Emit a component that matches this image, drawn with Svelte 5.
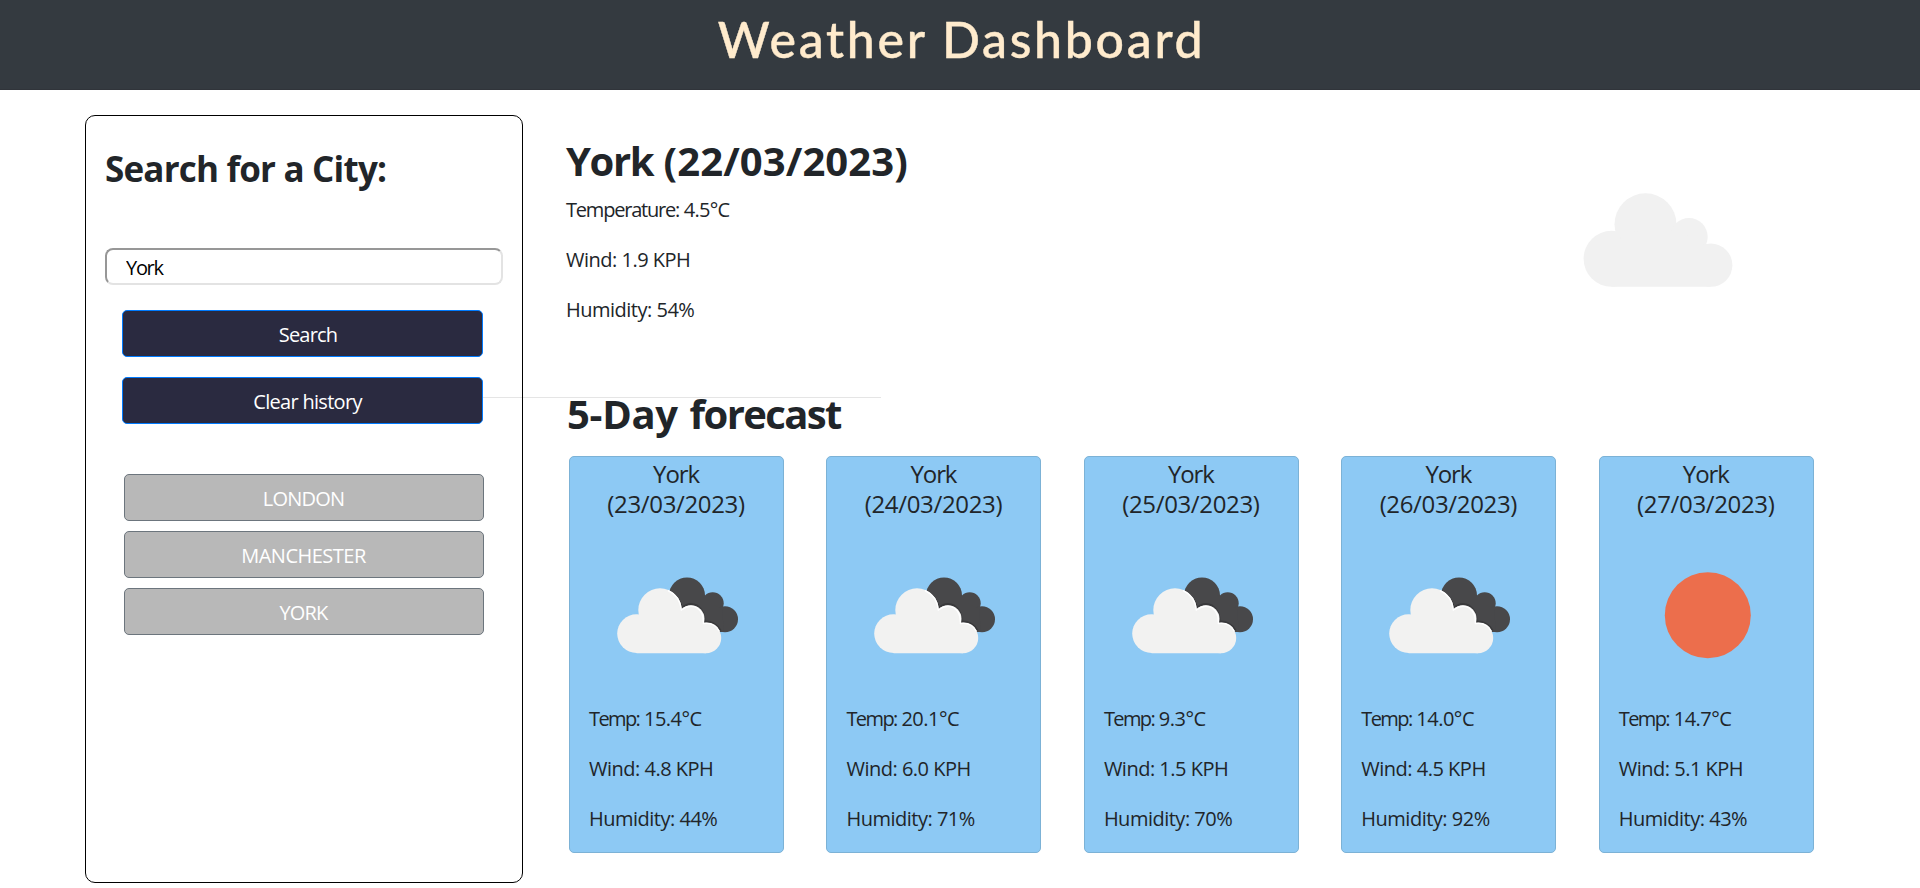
<script>
  let city = $state('York');

  const history = [
    { name: 'LONDON', spacing: -0.82 },
    { name: 'MANCHESTER', spacing: -0.5 },
    { name: 'YORK', spacing: -0.8 }
  ];

  const forecast = [
    { date: '23/03/2023', icon: 'clouds', temp: '15.4', wind: '4.8', humidity: 44 },
    { date: '24/03/2023', icon: 'clouds', temp: '20.1', wind: '6.0', humidity: 71 },
    { date: '25/03/2023', icon: 'clouds', temp: '9.3', wind: '1.5', humidity: 70 },
    { date: '26/03/2023', icon: 'clouds', temp: '14.0', wind: '4.5', humidity: 92 },
    { date: '27/03/2023', icon: 'sun', temp: '14.7', wind: '5.1', humidity: 43 }
  ];
</script>

<header><h1>Weather Dashboard</h1></header>

<div class="page">
  <aside>
    <h2>Search for a City:</h2>
    <input type="text" bind:value={city} />
    <div class="actions">
      <button class="primary search">Search</button>
      <button class="primary">Clear history</button>
      <hr />
    </div>
    <div class="history">
      {#each history as item}
        <button class="city" style="letter-spacing: {item.spacing}px">{item.name}</button>
      {/each}
    </div>
  </aside>

  <main>
    <section class="today">
      <div>
        <h2><span class="place">York</span> (22/03/2023)</h2>
        <p class="temperature"><span>Temperature:</span> 4.5°C</p>
        <p>Wind: 1.9 KPH</p>
        <p>Humidity: 54%</p>
      </div>
      <svg class="now" width="150" height="94" viewBox="0 0 150 94" fill="#f1f1f1">
        <circle cx="28.6" cy="65.8" r="28" />
        <circle cx="62.5" cy="31.3" r="31" />
        <circle cx="106" cy="43.8" r="18.7" />
        <circle cx="127.8" cy="72.2" r="21.6" />
        <path d="M28.6 50L50 38L106 43L127.8 60V93.8H28.6Z" />
      </svg>
    </section>

    <h2 class="outlook"><span>5-Day</span> forecast</h2>
    <section class="cards">
      {#each forecast as day}
        <article>
          <h3><span>York</span><br />({day.date})</h3>
          <svg width="213" height="184" viewBox="0 0 213 184">
            {#if day.icon === 'sun'}
              <circle cx="107.8" cy="96.2" r="43" fill="#ec6e4c" />
            {:else}
              <g fill="#48484a">
                <circle cx="117" cy="76.5" r="18" />
                <circle cx="142.7" cy="84.3" r="11" />
                <circle cx="155" cy="100.2" r="13" />
                <path d="M117 76L134 76L142 85L152 90L154 113H117Z" />
              </g>
              <g fill="none" stroke="#2e2e30" stroke-width="2" opacity="0.55">
                <path d="M99.5 72.5Q110 78 112.3 90.5" />
                <path d="M112.3 88.5Q119 82.5 127 86.5Q135 92 134.5 103" />
                <path d="M134.5 102.5Q145 102 150.5 111.5" />
              </g>
              <g fill="#f2f2f1">
                <circle cx="66.6" cy="114.6" r="19.4" />
                <circle cx="90" cy="91" r="21.7" />
                <circle cx="121" cy="99.8" r="13.5" />
                <circle cx="136" cy="119" r="15.2" />
                <path d="M66.6 100L84 96L121 98L136 108V134.2H66.6Z" />
              </g>
              <g fill="none" stroke="#fff" stroke-width="1.4">
                <path d="M98 71.5Q110 77 111.4 91Q119 85 127 88.8Q133.8 93 133.5 104.5Q145 103 149.5 112.5" />
              </g>
            {/if}
          </svg>
          <p class="temp"><span>Temp:</span> {day.temp}°C</p>
          <p>Wind: {day.wind} KPH</p>
          <p>Humidity: {day.humidity}%</p>
        </article>
      {/each}
    </section>
  </main>
</div>

<style>
  :global(body) {
    margin: 0;
    background: #fff;
    color: #212529;
    font: 400 20px/30px "Open Sans", "Noto Sans", sans-serif;
    overflow: hidden;
  }
  * { box-sizing: border-box; }
  h1, h2, h3, p { margin: 0; }
  svg { display: block; }

  header {
    height: 90px;
    padding: 9px 0 0 3px;
    background: #343a40;
    border-bottom: 1px solid #30343a;
    text-align: center;
  }
  h1 {
    font: 500 50px/60px Lato, sans-serif;
    letter-spacing: 2.7px;
    color: #ffebcd;
    -webkit-text-stroke: 0.4px #ffebcd;
  }

  .page {
    display: flex;
    gap: 43px;
    padding: 25px 85px 0;
  }
  aside {
    width: 438px;
    height: 768px;
    flex: none;
    padding: 32px 19px 0;
    border: 1px solid #000;
    border-radius: 10px;
  }
  aside h2 {
    font-size: 35px;
    line-height: 42px;
    letter-spacing: -0.8px;
  }
  input {
    display: block;
    width: 398px;
    height: 37px;
    margin-top: 58px;
    padding: 2px 0 0 19px;
    border: 2px solid;
    border-color: #979797 #e3e3e3 #e3e3e3 #979797;
    border-radius: 8px;
    background: #fff;
    color: #000;
    font: inherit;
    letter-spacing: -1.3px;
  }
  .actions {
    position: relative;
    display: grid;
    gap: 20px;
    margin: 25px 0 0 17px;
  }
  .history {
    display: grid;
    gap: 10px;
    margin: 50px 0 0 19px;
  }
  button {
    width: 361px;
    height: 47px;
    padding: 9px 0 6px;
    border: 1px solid #007bff;
    border-radius: 5px;
    color: #fff;
    font: inherit;
    text-align: center;
  }
  .primary {
    padding-left: 10px;
    background: #2a2a40;
    letter-spacing: -0.7px;
  }
  .search { padding-left: 11px; letter-spacing: -0.81px; }
  .city {
    width: 360px;
    padding-right: 1px;
    background: #b8b8b8;
    border-color: #6c757d;
  }
  hr {
    position: absolute;
    left: 361px;
    top: 87px;
    width: 398px;
    margin: 0;
    border: 0;
    border-top: 1px solid rgba(0, 0, 0, 0.1);
  }

  main { flex: 1; padding-top: 22px; }
  main h2 {
    font-size: 40px;
    line-height: 48px;
    letter-spacing: 0.1px;
    white-space: nowrap;
  }
  .place { letter-spacing: -1.4px; }
  .today {
    display: flex;
    justify-content: space-between;
    height: 253px;
    padding-right: 102px;
  }
  .today h2 { margin-bottom: 10px; }
  .now { margin-top: 56px; }
  p {
    margin-bottom: 20px;
    letter-spacing: -0.5px;
  }
  p.temperature { letter-spacing: -0.7px; }
  p.temperature span { letter-spacing: -1.2px; }
  p.temp { letter-spacing: -0.5px; }
  p.temp span { letter-spacing: -1.6px; }
  main .outlook { letter-spacing: -1.6px; padding-left: 1px; }
  .outlook span { letter-spacing: -0.3px; margin-right: 3px; }

  .cards {
    display: grid;
    grid-template-columns: repeat(5, 215px);
    column-gap: 42.45px;
    margin: 18px 0 0 3px;
  }
  article {
    height: 397px;
    padding-top: 2px;
    background: #8dc9f4;
    border: 1px solid #7cb2d6;
    border-radius: 5px;
  }
  article svg { margin-bottom: 1px; }
  article p { padding-left: 19px; }
  h3 {
    padding-right: 1px;
    font-size: 24px;
    font-weight: 400;
    line-height: 30px;
    letter-spacing: -0.35px;
    text-align: center;
  }
  h3 span { letter-spacing: -1.1px; }
</style>
